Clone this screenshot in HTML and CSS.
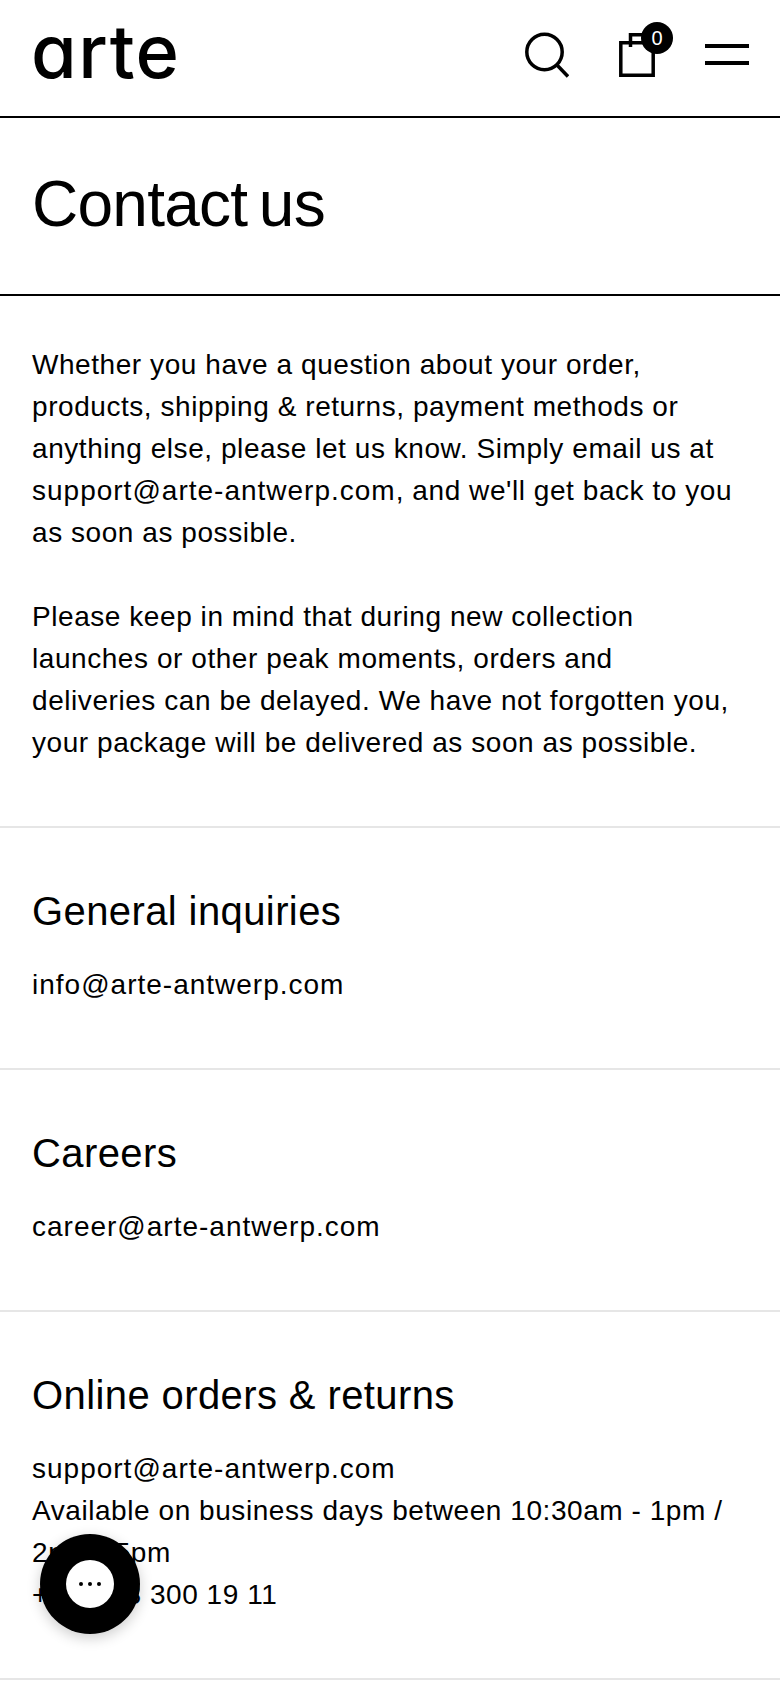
FILE: index.html
```html
<!DOCTYPE html>
<html lang="en">
<head>
<meta charset="utf-8">
<title>Contact us</title>
<link rel="stylesheet" href="styles.css">
</head>
<body>
<header class="site-header">
  <a class="logo">arte</a>
  <div class="header-icons">
    <svg class="icon-search" width="44" height="46" viewBox="0 0 44 46" fill="none" stroke="#000" stroke-width="3.500"><circle cx="19.500" cy="20" r="17.700"/><path d="M31.500 32.500l11.500 12"/></svg>
    <div class="cart">
      <svg width="36" height="44" viewBox="0 0 36 44" fill="none" stroke="#000" stroke-width="3.500"><path d="M1.800 9.800h32.400v32.400H1.800zM11.500 14V1.800h16v8"/></svg>
      <span class="cart-count">0</span>
    </div>
    <div class="burger"><span></span><span></span></div>
  </div>
</header>
<section class="title-band"><h1>Contact us</h1></section>
<section class="intro">
  <p>Whether you have a question about your order, products, shipping &amp; returns, payment methods or anything else, please let us know. Simply email us at<br><span class="email">support@arte-antwerp.com</span>, and we'll get back to you<br>as soon as possible.</p>
  <p>Please keep in mind that during new collection launches or other peak moments, orders and deliveries can be delayed. We have not forgotten you, your package will be delivered as soon as possible.</p>
</section>
<section class="block">
  <h2>General inquiries</h2>
  <p><span class="email">info@arte-antwerp.com</span></p>
</section>
<section class="block">
  <h2>Careers</h2>
  <p><span class="email">career@arte-antwerp.com</span></p>
</section>
<section class="block">
  <h2>Online orders &amp; returns</h2>
  <p><span class="email">support@arte-antwerp.com</span><br>Available on business days between 10:30am - 1pm / 2pm - 5pm<br>+32 (0)3 300 19 11</p>
</section>
<button class="chat" aria-label="Chat">
  <svg width="48" height="48" viewBox="0 0 48 48"><circle cx="24" cy="24" r="24" fill="#fff"/><path d="M39 43h9v5h-9z" fill="#000"/><circle cx="15" cy="24" r="2" fill="#000"/><circle cx="24" cy="24" r="2" fill="#000"/><circle cx="33" cy="24" r="2" fill="#000"/></svg>
</button>
</body>
</html>
```
FILE: styles.css
```css
* { box-sizing: border-box; }
html, body { margin: 0; padding: 0; background: #fff; }
body { color: #000; font-family: "Liberation Sans", Arial, sans-serif; overflow: hidden; height: 1688px; }
.site-header { height: 118px; border-bottom: 2px solid #000; padding: 0 31px; display: flex; align-items: flex-start; justify-content: space-between; }
.logo { font-family: Inter, sans-serif; font-feature-settings: "cv11" 1; font-weight: 550; font-size: 74px; line-height: 1; letter-spacing: 1.500px; margin-top: 14px; }
.header-icons { display: flex; align-items: flex-start; }
.icon-search { margin: 32px 50px 0 0; }
.cart { position: relative; width: 36px; height: 44px; margin: 33px 50px 0 0; }
.cart svg { display: block; }
.cart-count { position: absolute; left: 22px; top: -11px; width: 32px; height: 32px; border-radius: 50%; background: #000; color: #fff; font-size: 20px; line-height: 32px; text-align: center; }
.burger { width: 44px; margin-top: 44px; display: flex; flex-direction: column; gap: 13.500px; }
.burger span { height: 3.500px; background: #000; }
.title-band { height: 178px; border-bottom: 2px solid #000; padding: 0 32px 4px; display: flex; align-items: center; }
h1 { margin: 0; font-weight: 400; font-size: 64px; letter-spacing: -0.750px; word-spacing: -5.500px; line-height: 1; }
.intro { padding: 48px 42px 62px 32px; border-bottom: 2px solid #e6e6e6; }
p { margin: 0; font-size: 28px; line-height: 42px; letter-spacing: 0.560px; }
.email { letter-spacing: 1px; }
.intro p + p { margin-top: 42px; }
.block { padding: 59px 32px 62px; border-bottom: 2px solid #e6e6e6; }
h2 { margin: 0 0 29px; font-weight: 400; font-size: 40px; line-height: 48px; letter-spacing: 0.400px; }
.chat { position: fixed; left: 40px; top: 1534px; width: 100px; height: 100px; padding: 0; border: 0; border-radius: 50%; background: #000; display: flex; align-items: center; justify-content: center; box-shadow: 0 4px 14px rgba(0,0,0,.2); }
```
